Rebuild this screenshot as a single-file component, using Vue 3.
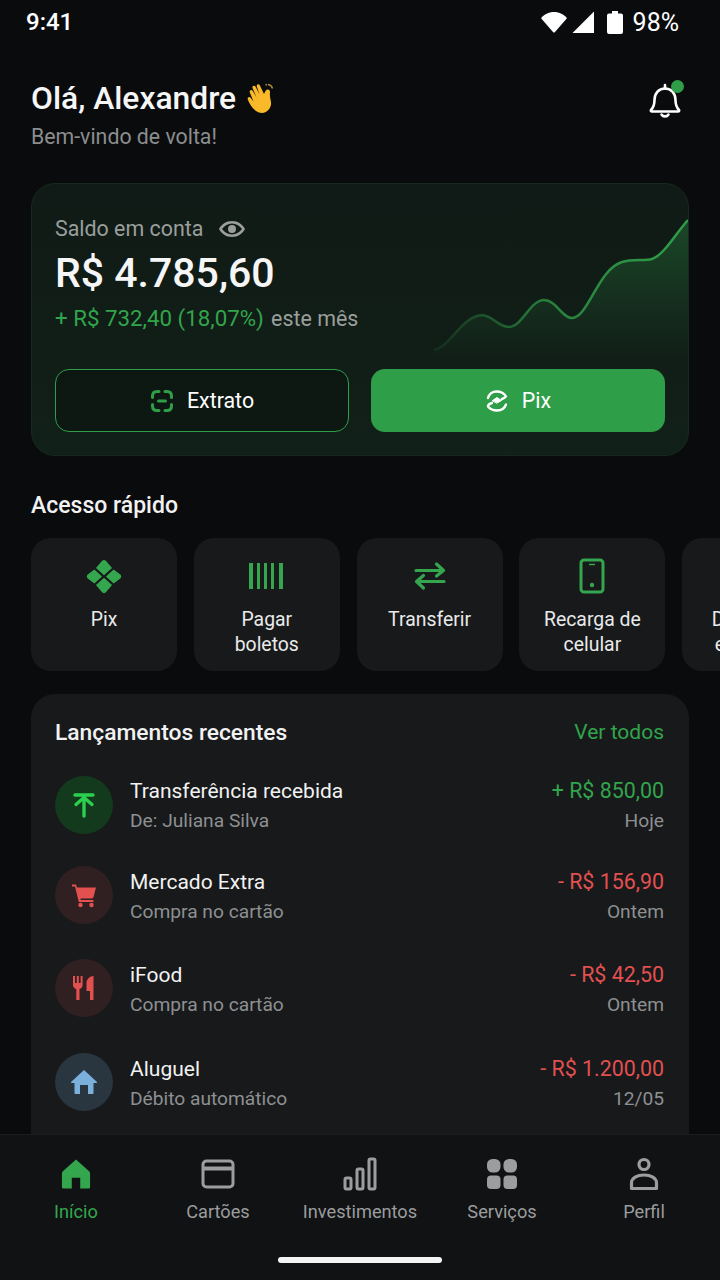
<script setup>
const tiles = [
  { id: 'pix', label: 'Pix' },
  { id: 'bar', label: 'Pagar boletos' },
  { id: 'swap', label: 'Transferir' },
  { id: 'phone', label: 'Recarga de celular' },
  { id: 'none', label: 'Depósitos em conta' },
]

const rows = [
  { id: 'in', tone: 'green', title: 'Transferência recebida', sub: 'De: Juliana Silva', value: '+ R$ 850,00', date: 'Hoje' },
  { id: 'cart', tone: 'red', title: 'Mercado Extra', sub: 'Compra no cartão', value: '- R$ 156,90', date: 'Ontem' },
  { id: 'food', tone: 'red', title: 'iFood', sub: 'Compra no cartão', value: '- R$ 42,50', date: 'Ontem' },
  { id: 'home', tone: 'blue', title: 'Aluguel', sub: 'Débito automático', value: '- R$ 1.200,00', date: '12/05' },
]

const nav = ['Início', 'Cartões', 'Investimentos', 'Serviços', 'Perfil']
</script>

<template>
  <div class="screen">
    <div class="status">
      <span>9:41</span>
      <div class="status-right">
        <svg class="s-wifi" width="26" height="22" viewBox="0 0 26 22"><path d="M.5 6.500C3 3.500 7.500 1 13 1S23 3.500 25.500 6.500Q26 7.200 25.500 7.800L14 21Q13 22 12 21L.5 7.800Q0 7.200 .5 6.500Z" fill="#fff" /></svg>
        <svg class="s-signal" width="22" height="22" viewBox="0 0 22 22"><path d="M22 .5V22H.5Z" fill="#fff" /></svg>
        <svg class="s-batt" width="16" height="23" viewBox="0 0 16 23"><path d="M5 0H11V2.500H14Q16 2.500 16 4.500V21Q16 23 14 23H2Q0 23 0 21V4.500Q0 2.500 2 2.500H5Z" fill="#fff" /></svg>
        <span class="pct">98%</span>
      </div>
    </div>

    <main class="main">
      <header class="head">
        <div>
          <h1>Olá, Alexandre
            <svg class="wave" width="30" height="32" viewBox="0 0 30 32">
              <path d="M9 29C5 26 2 21 .8 17.500C0 15.500 2.500 14 3.800 16L6.500 19.500L2.800 10.500C2 8.500 4.500 7 5.800 9L9.500 15.500L5.500 6C4.800 4 7.300 2.800 8.500 4.500L12.500 12.500L9.800 4.500C9.300 2.500 11.800 1.500 12.800 3.300L17 12L18.500 9C19.500 6.500 23.500 7 23 10.500C22.500 13.500 23.500 17 24 20C24.800 26 20 31 15 31C12.800 31 10.800 30.300 9 29Z" fill="#f9b928" />
              <path d="M21 2.500C23 2.800 25 4.500 25.500 6.500M18.500 2.500L20 3" stroke="#a98a3c" stroke-width="1.500" fill="none" />
            </svg>
          </h1>
          <p>Bem-vindo de volta!</p>
        </div>
        <div class="bell">
          <svg width="34" height="38" viewBox="0 0 34 38" fill="none" stroke="#fff" stroke-width="2.600" stroke-linejoin="round" stroke-linecap="round">
            <path d="M3 29C6 26 6.500 24 6.500 19C6.500 12.500 10.500 7.500 17 7.500C23.500 7.500 27.500 12.500 27.500 19C27.500 24 28 26 31 29C31.500 29.800 31 30.500 30 30.500H4C3 30.500 2.500 29.800 3 29Z" />
            <path d="M17 4V7.500M13.500 33.500C15 36 19 36 20.500 33.500" />
          </svg>
          <i class="dot"></i>
        </div>
      </header>

      <section class="balance">
        <svg class="chart" width="256" height="140" viewBox="0 0 256 140">
          <defs>
            <linearGradient id="lineFade" x1="0" x2="1" y1="0" y2="0">
              <stop offset="0" stop-color="#2f9e48" stop-opacity="0.1" />
              <stop offset="0.45" stop-color="#2f9e48" stop-opacity="0.75" />
              <stop offset="1" stop-color="#2f9e48" />
            </linearGradient>
            <linearGradient id="areaFade" x1="0" x2="0" y1="0" y2="1">
              <stop offset="0" stop-color="#2f9e48" stop-opacity="0.34" />
              <stop offset="1" stop-color="#2f9e48" stop-opacity="0" />
            </linearGradient>
          </defs>
          <path d="M2 131C18 128 30 97 50 96C60 96 66 108 77 108C90 108 98 81 112 81C124 81 130 99 140 99C156 99 166 50 190 43C200 40 212 42 220 40C232 36 244 14 256 1V140H2Z" fill="url(#areaFade)" />
          <path d="M2 131C18 128 30 97 50 96C60 96 66 108 77 108C90 108 98 81 112 81C124 81 130 99 140 99C156 99 166 50 190 43C200 40 212 42 220 40C232 36 244 14 256 1" fill="none" stroke="url(#lineFade)" stroke-width="2.500" />
        </svg>
        <div class="label">
          Saldo em conta
          <svg width="28" height="20" viewBox="0 0 28 20"><path fill-rule="evenodd" d="M14 2C20 2 24.500 5.500 27 10C24.500 14.500 20 18 14 18C8 18 3.500 14.500 1 10C3.500 5.500 8 2 14 2ZM14 4.500C10 4.500 6.500 6.800 4 10C6.500 13.200 10 15.500 14 15.500C18 15.500 21.500 13.200 24 10C21.500 6.800 18 4.500 14 4.500ZM14 6A4 4 0 1 1 14 14A4 4 0 1 1 14 6Z" fill="#9a9f9c" /></svg>
        </div>
        <div class="amount">R$ 4.785,60</div>
        <div class="gain"><b>+ R$ 732,40 (18,07%)</b> este mês</div>
        <div class="actions">
          <button class="btn outline">
            <svg width="24" height="24" viewBox="0 0 24 24" fill="none" stroke="#2f9e48" stroke-width="3" stroke-linecap="round" stroke-linejoin="round">
              <path d="M2.500 8.500V7Q2.500 2.500 7 2.500H9M15 2.500H17Q21.500 2.500 21.500 7V8.500M2.500 15.500V17Q2.500 21.500 7 21.500H9M15 21.500H17Q21.500 21.500 21.500 17V15.500M8.500 12H15.500" />
            </svg>
            Extrato
          </button>
          <button class="btn solid">
            <svg width="24" height="24" viewBox="0 0 24 24" fill="none" stroke="#fff" stroke-width="2.400" stroke-linecap="round" stroke-linejoin="round">
              <path d="M3 9C4 5 7.500 2.500 11.500 2.500C15.500 2.500 19 4 21 7.500C19.500 9 18.500 9.500 17 10M21 15.500C19.500 19.500 16 21.500 12 21.500C8.500 21.500 5 20 3 17.500C3 15.500 4.500 14.500 7 14" />
              <path d="M7.500 11.500L12 8.500L16.500 11.500L12 14Z" fill="#fff" stroke-width="1" />
            </svg>
            Pix
          </button>
        </div>
      </section>

      <h2 class="section-title">Acesso rápido</h2>
      <div class="tiles">
        <div v-for="t in tiles" :key="t.id" class="tile">
          <div class="tile-icon">
            <svg v-if="t.id === 'pix'" width="36" height="37" viewBox="0 0 38 38" fill="#34a64d">
              <path d="M19 1.500Q20 1.500 21 2.500L27.500 10L19 17.800L10.500 10L17 2.500Q18 1.500 19 1.500Z" />
              <path d="M19 36.500Q20 36.500 21 35.500L27.500 28L19 20.200L10.500 28L17 35.500Q18 36.500 19 36.500Z" />
              <path d="M.8 19Q.8 18 1.800 17L8.800 11.500L17 19L8.800 26.500L1.800 21Q.8 20 .8 19Z" />
              <path d="M37.200 19Q37.200 18 36.200 17L29.200 11.500L21 19L29.200 26.500L36.200 21Q37.200 20 37.200 19Z" />
            </svg>
            <svg v-else-if="t.id === 'bar'" width="38" height="28" viewBox="0 0 38 28" fill="#34a64d">
              <rect x="1" y="1" width="4" height="26" />
              <rect x="9" y="1" width="3" height="26" />
              <rect x="16" y="1" width="3" height="26" />
              <rect x="23" y="1" width="3" height="26" />
              <rect x="31" y="1" width="4" height="26" />
            </svg>
            <svg v-else-if="t.id === 'swap'" width="34" height="30" viewBox="0 0 34 30" fill="none" stroke="#34a64d" stroke-width="3.200" stroke-linecap="round" stroke-linejoin="round">
              <path d="M3 9.500H30M23.500 3L30.500 9.500L23.500 15M31 20.500H4M10.500 14.500L3.500 20.500L10.500 27" />
            </svg>
            <svg v-else-if="t.id === 'phone'" width="26" height="36" viewBox="0 0 26 36" fill="none" stroke="#34a64d" stroke-width="3">
              <rect x="2" y="2" width="22" height="32" rx="3" />
              <path d="M10 6.500H16" stroke-width="1.500" />
              <circle cx="13" cy="27" r="2.200" fill="#34a64d" stroke="none" />
            </svg>
          </div>
          <span>{{ t.label }}</span>
        </div>
      </div>

      <section class="recent">
        <div class="recent-head">
          <h3>Lançamentos recentes</h3>
          <a>Ver todos</a>
        </div>
        <div v-for="r in rows" :key="r.id" class="row">
          <div class="bubble" :class="r.tone">
            <svg v-if="r.id === 'in'" width="26" height="26" viewBox="0 0 26 26" fill="none" stroke="#2cd04f" stroke-width="3.400" stroke-linecap="round" stroke-linejoin="round">
              <path d="M4 3H22M13 24V6.500M5 12.500L13 5.500L21 12.500" />
            </svg>
            <svg v-else-if="r.id === 'cart'" width="26" height="26" viewBox="0 0 26 26" fill="#e25050">
              <path d="M1 2.500H5L6 5.500H25L22.500 15Q22 16.500 20.500 16.500H9.500L9.800 18H22.500V20H7.800L4 4.500H1Z" />
              <circle cx="9.500" cy="23" r="2.200" />
              <circle cx="20.500" cy="23" r="2.200" />
            </svg>
            <svg v-else-if="r.id === 'food'" width="24" height="26" viewBox="0 0 24 26" fill="#e25050">
              <path d="M1 1H3V8H4.800V1H6.800V8H8.600V1H10.600V10C10.600 12 9.500 13.500 7.500 14V25H4.300V14C2.200 13.500 1 12 1 10Z" />
              <path d="M21.500 1V25H18V16H14.500V8C14.500 4.500 17 1.500 21.500 1Z" />
            </svg>
            <svg v-else width="28" height="26" viewBox="0 0 28 26" fill="#7cb0dc">
              <path d="M14 1L27 13Q27.500 14 26 14H23.500V24Q23.500 25 22.500 25H18V16H10V25H5.500Q4.500 25 4.500 24V14H2Q.5 14 1 13Z" />
            </svg>
          </div>
          <div class="row-text">
            <div class="row-title">{{ r.title }}</div>
            <div class="row-sub">{{ r.sub }}</div>
          </div>
          <div class="row-end">
            <div class="row-value" :class="r.tone === 'green' ? 'pos' : 'neg'">{{ r.value }}</div>
            <div class="row-sub">{{ r.date }}</div>
          </div>
        </div>
      </section>
    </main>

    <nav class="nav">
      <div v-for="(n, i) in nav" :key="n" class="nav-item" :class="{ active: i === 0 }">
        <svg v-if="i === 0" width="30" height="32" viewBox="0 0 32 34" fill="#34a64d">
          <path d="M16 1.500L30 14Q31 15 31 16.500V31Q31 32.500 29.500 32.500H20.500V21H11.500V32.500H2.500Q1 32.500 1 31V16.500Q1 15 2 14Z" />
        </svg>
        <svg v-else-if="i === 1" width="34" height="30" viewBox="0 0 34 30" fill="none" stroke="#9b9d9e" stroke-width="3">
          <rect x="2" y="2" width="30" height="26" rx="3.500" />
          <path d="M2 9.500H32" stroke-width="4" />
        </svg>
        <svg v-else-if="i === 2" width="34" height="32" viewBox="0 0 34 34" fill="none" stroke="#9b9d9e" stroke-width="3" stroke-linejoin="round">
          <rect x="2" y="21" width="6" height="11" rx="1.500" />
          <rect x="14" y="12" width="6" height="20" rx="1.500" />
          <rect x="26" y="2" width="6" height="30" rx="1.500" />
        </svg>
        <svg v-else-if="i === 3" width="32" height="32" viewBox="0 0 32 32" fill="#9b9d9e">
          <rect x="1" y="1" width="13.500" height="13.500" rx="5.500" />
          <rect x="17.500" y="1" width="13.500" height="13.500" rx="5.500" />
          <rect x="1" y="17.500" width="13.500" height="13.500" rx="4" />
          <rect x="17.500" y="17.500" width="13.500" height="13.500" rx="4" />
        </svg>
        <svg v-else width="30" height="32" viewBox="0 0 30 34" fill="none" stroke="#9b9d9e" stroke-width="3.200">
          <circle cx="15" cy="7.500" r="5" />
          <path d="M2.500 31.500V26C2.500 21 8 18 15 18C22 18 27.500 21 27.500 26V31.500Z" stroke-linejoin="round" />
        </svg>
        <span>{{ n }}</span>
      </div>
      <i class="home-bar"></i>
    </nav>
  </div>
</template>

<style>
html,
body {
  margin: 0;
  background: #0a0b0d;
}
</style>

<style scoped>
.screen {
  width: 720px;
  height: 1280px;
  display: flex;
  flex-direction: column;
  overflow: hidden;
  background: #0a0b0d;
  color: #fff;
  font-family: Roboto, "Noto Sans", sans-serif;
}

.status {
  height: 44px;
  padding: 0 41px 0 26px;
  display: flex;
  align-items: center;
  justify-content: space-between;
  font-size: 24px;
  font-weight: 500;
  flex: none;
}

.status-right {
  display: flex;
  align-items: center;
}

.s-signal {
  margin-left: 5px;
}

.s-batt {
  margin-left: 13px;
}

.pct {
  margin-left: 10px;
  font-size: 25px;
  font-weight: 400;
}

.main {
  flex: 1;
  min-height: 0;
  overflow: hidden;
  padding: 0 31px;
}

.head {
  display: flex;
  justify-content: space-between;
  margin-top: 34px;
  height: 105px;
}

h1 {
  margin: 0;
  font-size: 31.800px;
  font-weight: 500;
  line-height: 40px;
  display: flex;
  align-items: center;
  gap: 11px;
  color: #f6f6f6;
}

.head p {
  margin: 6px 0 0;
  font-size: 21.300px;
  line-height: 26px;
  color: #8b8e8f;
}

.bell {
  position: relative;
  margin: 3px 7px 0 0;
  height: 38px;
}

.dot {
  position: absolute;
  top: -1px;
  right: -2px;
  width: 13px;
  height: 13px;
  border-radius: 50%;
  background: #2f9e48;
}

.balance {
  position: relative;
  height: 273px;
  box-sizing: border-box;
  padding: 31px 23px 0;
  border: 1px solid #17291d;
  border-radius: 24px;
  overflow: hidden;
  background: linear-gradient(180deg, #101a16 0%, #111d17 55%, #112019 100%);
}

.chart {
  position: absolute;
  right: 0;
  top: 35px;
}

.label {
  position: relative;
  display: flex;
  align-items: center;
  gap: 15px;
  font-size: 21.400px;
  line-height: 28px;
  color: #9a9f9c;
}

.amount {
  position: relative;
  margin-top: 6px;
  font-size: 41px;
  font-weight: 500;
  line-height: 48px;
  color: #f6f6f6;
}

.gain {
  position: relative;
  margin-top: 7px;
  height: 28px;
  font-size: 21.400px;
  line-height: 28px;
  color: #9a9f9c;
}

.gain b {
  font-size: 22.300px;
  font-weight: 400;
  color: #31a54b;
  margin-right: 2px;
}

.actions {
  position: relative;
  margin-top: 37px;
  display: grid;
  grid-template-columns: 1fr 1fr;
  gap: 22px;
}

.btn {
  height: 63px;
  border-radius: 14px;
  font-family: inherit;
  font-size: 21.400px;
  color: #fff;
  display: flex;
  align-items: center;
  justify-content: center;
  gap: 13px;
  padding: 0;
}

.outline {
  background: rgba(8, 16, 12, 0.45);
  border: 1.500px solid #2f9e48;
}

.solid {
  background: #2f9e48;
  border: 0;
}

.section-title {
  margin: 36px 0 18px;
  font-size: 23px;
  line-height: 28px;
  font-weight: 500;
  color: #f2f2f2;
}

.tiles {
  display: flex;
  gap: 16.800px;
  width: 800px;
}

.tile {
  flex: none;
  width: 146px;
  height: 133px;
  box-sizing: border-box;
  padding-top: 18px;
  border-radius: 20px;
  background: #18191b;
  text-align: center;
  font-size: 19.400px;
  line-height: 25px;
  color: #e9eaea;
}

.tile-icon {
  height: 40px;
  display: flex;
  align-items: center;
  justify-content: center;
  margin-bottom: 11px;
}

.tile span {
  display: block;
  padding: 0 20px;
}

.recent {
  margin-top: 23px;
  height: 500px;
  box-sizing: border-box;
  padding: 24px 25px 0 24px;
  border-radius: 24px;
  background: #18191b;
}

.recent-head {
  display: flex;
  justify-content: space-between;
  align-items: center;
  height: 28px;
  margin-bottom: 30px;
}

h3 {
  margin: 0;
  font-size: 22.800px;
  font-weight: 500;
  color: #f2f2f2;
}

.recent-head a {
  color: #31a54b;
  font-size: 21px;
}

.row {
  display: flex;
  align-items: center;
  gap: 17px;
  height: 58px;
  margin-bottom: 34px;
}

.row:nth-of-type(2) {
  margin-bottom: 32px;
}

.row:nth-of-type(3) {
  margin-bottom: 35px;
}

.row:nth-of-type(4) {
  margin-bottom: 36px;
}

.row:nth-of-type(n + 3) .row-text,
.row:nth-of-type(n + 3) .row-end {
  padding-top: 2px;
}

.bubble {
  flex: none;
  width: 58px;
  height: 58px;
  border-radius: 50%;
  display: flex;
  align-items: center;
  justify-content: center;
}

.bubble.green {
  background: #133a1d;
}

.bubble.red {
  background: #302021;
}

.bubble.blue {
  background: #29353f;
}

.row-text {
  flex: 1;
}

.row-title {
  font-size: 21px;
  line-height: 28px;
  color: #f1f2f2;
}

.row-sub {
  margin-top: 2px;
  font-size: 19.200px;
  line-height: 27px;
  color: #8d9092;
}

.row-end {
  text-align: right;
}

.row-value {
  font-size: 21.400px;
  line-height: 28px;
}

.pos {
  color: #31a54b;
}

.neg {
  color: #e25050;
}

.nav {
  position: relative;
  flex: none;
  height: 146px;
  box-sizing: border-box;
  padding: 21px 5px 0;
  display: grid;
  grid-template-columns: repeat(5, 1fr);
  align-items: start;
  background: #111214;
  border-top: 1px solid #1c1d1f;
}

.nav-item {
  display: flex;
  flex-direction: column;
  align-items: center;
  font-size: 18.200px;
  color: #9b9d9e;
}

.nav-item svg {
  height: 36px;
}

.nav-item span {
  margin-top: 9px;
}

.nav-item.active {
  color: #34a64d;
}

.home-bar {
  position: absolute;
  left: 278px;
  bottom: 17px;
  width: 164px;
  height: 6px;
  border-radius: 3px;
  background: #f4f4f4;
}
</style>
